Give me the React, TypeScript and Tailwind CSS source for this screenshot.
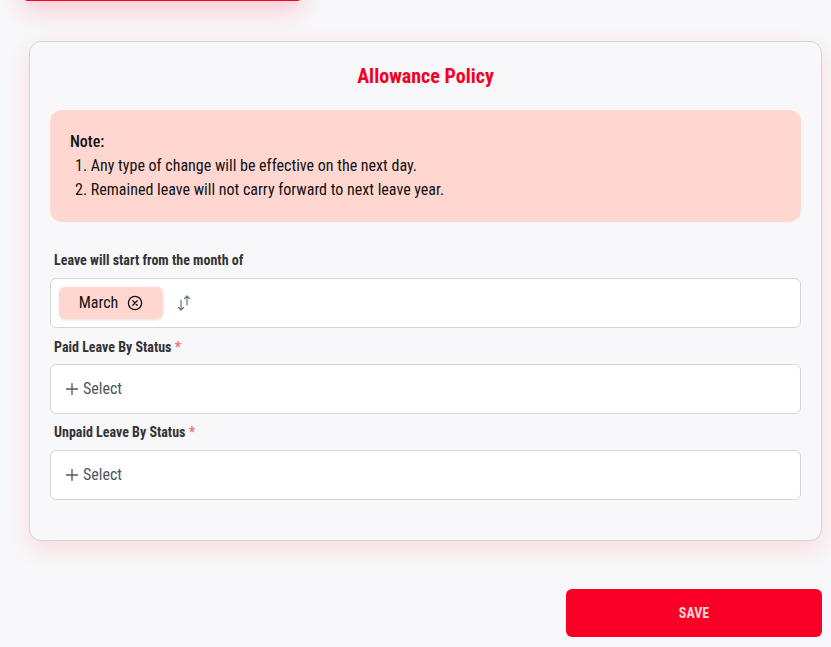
import React from 'react';

function SortIcon() {
    return (
        <svg width="18" height="18" viewBox="0 0 18 18" fill="none" stroke="#64748b" strokeWidth="1.2" strokeLinecap="round" strokeLinejoin="round">
            <path d="M5 6v10M2.5 13.5L5 16l2.5-2.5" />
            <path d="M11 11V2M8.5 4.5L11 2l2.5 2.5" />
        </svg>
    );
}

function CloseCircle() {
    return (
        <svg width="16" height="16" viewBox="0 0 16 16" fill="none" stroke="#111" strokeWidth="1.3" strokeLinecap="round">
            <circle cx="8" cy="8" r="6.6" />
            <path d="M5.8 5.8l4.4 4.4M10.2 5.8l-4.4 4.4" />
        </svg>
    );
}

function PlusIcon() {
    return (
        <svg width="12" height="12" viewBox="0 0 12 12" fill="none" stroke="#4b5563" strokeWidth="1.3" strokeLinecap="round">
            <path d="M6 0.5v11M0.5 6h11" />
        </svg>
    );
}

function SelectField() {
    return (
        <div className="h-[50px] bg-white border border-[#d6d6d8] rounded-md flex items-center px-[15px] gap-[5px] text-[#4b5563] text-[16px]">
            <PlusIcon />
            <span>Select</span>
        </div>
    );
}

export default function App() {
    return (
        <div className="min-h-[647px] bg-[#f8f8fa] relative overflow-hidden" style={{ fontFamily: '"Roboto Condensed", Roboto, "Liberation Sans", sans-serif', fontStretch: 'condensed' }}>
            <div className="absolute left-[22px] top-[-40px] w-[281px] h-[41px] bg-[#fa0026] rounded-md shadow-[0_10px_24px_rgba(250,0,38,0.18)]" />
            <div className="pt-[41px] pl-[29px] pr-[9px]">
                <div className="border border-[#d4d4d8] rounded-xl bg-[#f8f8fa] shadow-[0_8px_24px_rgba(255,90,80,0.18)] px-[20px] pt-[22px] pb-[40px]">
                    <h2 className="text-center text-[#f50025] font-bold text-[20px] leading-[24px]">Allowance Policy</h2>
                    <div className="mt-[22px] bg-[#ffd7d0] rounded-xl h-[112px] px-[20px] pt-[20px] text-[#111] text-[16px] leading-[24px]">
                        <p className="font-medium">Note:</p>
                        <ol className="pl-[5px]">
                            <li>1. Any type of change will be effective on the next day.</li>
                            <li>2. Remained leave will not carry forward to next leave year.</li>
                        </ol>
                    </div>
                    <label className="block mt-[29px] ml-[4px] text-[14px] font-bold text-[#333] leading-[18px]">Leave will start from the month of</label>
                    <div className="mt-[9px] h-[50px] bg-white border border-[#d6d6d8] rounded-md flex items-center pl-[8px] gap-[13px]">
                        <div className="h-[32px] w-[104px] bg-[#ffd7d0] rounded-md shadow-[0_1px_3px_rgba(0,0,0,0.12)] flex items-center justify-center gap-[9px] text-[16px] text-[#111]">
                            <span>March</span>
                            <CloseCircle />
                        </div>
                        <SortIcon />
                    </div>
                    <label className="block mt-[10px] ml-[4px] text-[14px] font-bold text-[#333] leading-[18px]">
                        Paid Leave By Status <span className="text-[#f87171]">*</span>
                    </label>
                    <div className="mt-[8px]"><SelectField /></div>
                    <label className="block mt-[9px] ml-[4px] text-[14px] font-bold text-[#333] leading-[18px]">
                        Unpaid Leave By Status <span className="text-[#f87171]">*</span>
                    </label>
                    <div className="mt-[9px]"><SelectField /></div>
                </div>
                <div className="flex justify-end mt-[48px]">
                    <button className="w-[256px] h-[48px] bg-[#fa0026] rounded-md text-[#ffd7d0] font-bold text-[14px]">SAVE</button>
                </div>
            </div>
        </div>
    );
}
